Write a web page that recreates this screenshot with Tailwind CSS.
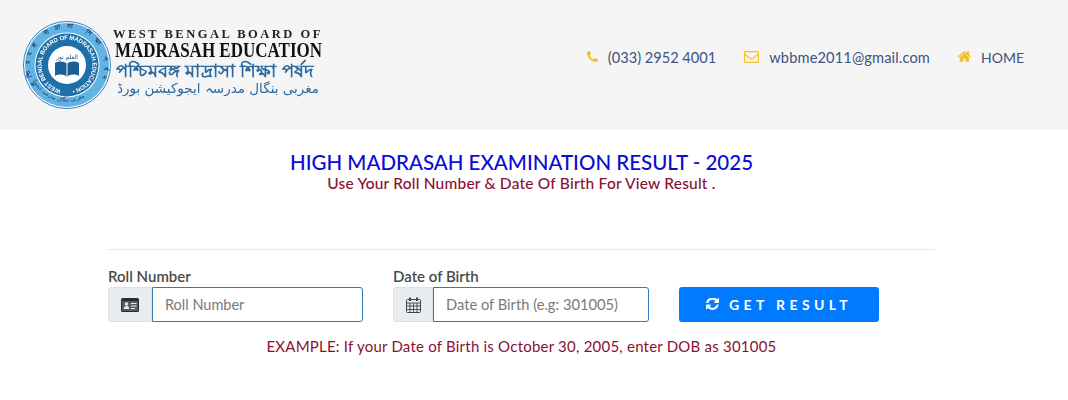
<!DOCTYPE html>
<html><head><meta charset="utf-8"><script src="https://cdn.jsdelivr.net/npm/@tailwindcss/browser@4"></script></head>
<body class="bg-white font-['Lato','Open_Sans',sans-serif]">
<div class="h-[400px] w-[1068px] overflow-hidden">
<header class="h-[130px] bg-[#f5f5f6] flex items-center justify-between pl-[22px] pr-[44px]">
  <div class="flex items-center gap-[1px] blur-[0.3px]">
    <svg width="90" height="90" viewBox="-1 -1 90 90" class="shrink-0">
      <defs>
        <path id="inner" d="M44 69.500a25.500 25.500 0 1 1 0-51a25.500 25.500 0 1 1 0 51"/>
        <path id="band" d="M14 66a37 37 0 1 1 60 0"/>
        <path id="bandb" d="M10 60a38.500 38.500 0 0 0 68 0"/>
      </defs>
      <circle cx="44" cy="44" r="43.500" fill="#fff" stroke="#2f7fb8" stroke-width="1"/>
      <circle cx="44" cy="44" r="42" fill="#62b2e4"/>
      <circle cx="44" cy="44" r="32.500" fill="#fff"/>
      <circle cx="44" cy="44" r="31.500" fill="#1f6fa8"/>
      <circle cx="44" cy="44" r="19" fill="#fff"/>
      <text font-size="6" font-weight="700" fill="#fff" font-family="Liberation Sans"><textPath href="#inner" startOffset="6" textLength="148">WEST BENGAL BOARD OF MADRASAH EDUCATION •</textPath></text>
      <text font-size="6" font-weight="700" fill="#173f66" font-family="Noto Sans"><textPath href="#band" startOffset="2" textLength="150">পশ্চিমবঙ্গ মাদ্রাসা শিক্ষা পর্ষদ</textPath></text>
      <text font-size="5.500" fill="#173f66" font-family="DejaVu Sans" direction="rtl"><textPath href="#bandb" startOffset="60">مغربی بنگال مدرسہ ایجوکیشن بورڈ</textPath></text>
      <path d="M32 42c4-2 9-2 12 1 3-3 8-3 12-1v13c-4-2-9-2-12 1-3-3-8-3-12-1z" fill="#1b5f96"/>
      <path d="M44 43v13" stroke="#fff" stroke-width="1"/>
      <text x="44" y="38" text-anchor="middle" font-size="6" fill="#1b4f78" font-family="DejaVu Sans">العلم نور</text>
    </svg>
    <div class="w-[212px] flex flex-col mt-[-7px]">
      <div class="font-['Liberation_Serif',serif] font-bold text-[12.500px] leading-[16px] tracking-[2.500px] text-[#222] whitespace-nowrap">WEST BENGAL BOARD OF</div>
      <div class="ml-[2px] font-['Liberation_Serif',serif] font-bold text-[20px] leading-[17px] text-[#111] whitespace-nowrap origin-left scale-x-[0.85]">MADRASAH EDUCATION</div>
      <div class="ml-[3px] font-['Noto_Sans','DejaVu_Sans',sans-serif] font-bold text-[18.300px] tracking-[0.270px] leading-[21px] text-[#2a6a9f] whitespace-nowrap">পশ্চিমবঙ্গ মাদ্রাসা শিক্ষা পর্ষদ</div>
      <div dir="rtl" class="font-['DejaVu_Sans',sans-serif] text-[13.500px] leading-[17px] pr-[6px] text-[#2a6a9f] whitespace-nowrap">مغربی بنگال مدرسہ ایجوکیشن بورڈ</div>
    </div>
  </div>
  <nav class="flex items-center mb-[15px] text-[14.600px] text-[#3f5180]">
    <svg width="11" height="12" viewBox="0 0 1408 1536" fill="#f5c026" class="mr-[10px]"><path d="M1408 1112q0 27-10 70.500t-21 68.500q-21 50-122 106-94 51-186 51-27 0-53-3.500t-57.500-12.500-47-14.500-55.500-20.500-49-18q-98-35-175-83-127-79-264-216t-216-264q-48-77-83-175-3-9-18-49t-20.500-55.500-14.500-47-12.500-57.500-3.500-53q0-92 51-186 56-101 106-122 25-11 68.500-21t70.500-10q14 0 21 3 18 6 53 76 11 19 30 54t35 63.500 31 53.500q3 4 17.500 25t21.500 35.500 7 28.500q0 20-28.500 50t-62 55-62 53-28.500 46q0 9 5 22.500t8.500 20.500 14 24 11.500 19q76 137 174 235t235 174q2 1 19 11.500t24 14 20.500 8.500 22.500 5q18 0 46-28.500t53-62 55-62 50-28.500q14 0 28.500 7t35.500 21.500 25 17.500q25 15 53.500 31t63.500 35 54 30q70 35 76 53 3 7 3 21z"/></svg>
    <span class="mr-[28px]">(033) 2952 4001</span>
    <svg width="15" height="12" viewBox="0 128 1792 1408" fill="#f5c026" class="mr-[10px]"><path d="M1664 1376v-768q-32 36-69 66-268 206-426 338-51 43-83 67t-86.500 48.500-102.500 24.500h-2q-48 0-102.500-24.500t-86.500-48.500-83-67q-158-132-426-338-37-30-69-66v768q0 13 9.500 22.500t22.500 9.500h1472q13 0 22.500-9.500t9.500-22.500zm0-1051v-24.500l-.5-13-3-12.500-5.500-9-9-7.500-14-2.500h-1472q-13 0-22.500 9.500t-9.500 22.500q0 168 147 284 193 152 401 317 6 5 35 29.500t46 37.500 44.500 31.500 50.500 27.500 43 9h2q20 0 43-9t50.500-27.500 44.500-31.500 46-37.500 35-29.500q208-165 401-317 54-43 100.500-115.500t46.500-131.500zm128-37v1088q0 66-47 113t-113 47h-1472q-66 0-113-47t-47-113v-1088q0-66 47-113t113-47h1472q66 0 113 47t47 113z"/></svg>
    <span class="mr-[28px] tracking-[0.150px]">wbbme2011@gmail.com</span>
    <svg width="13" height="12" viewBox="100 128 1600 1408" fill="#f5c026" class="mr-[10px]"><path d="M1472 864v480q0 26-19 45t-45 19h-384v-384h-256v384h-384q-26 0-45-19t-19-45v-480q0-1 .5-3t.5-3l575-474 575 474q1 2 1 6zm223-69l-62 74q-8 9-21 11h-3q-13 0-21-7l-692-577-692 577q-12 8-24 7-13-2-21-11l-62-74q-8-10-7-23.500t11-21.500l719-599q32-26 76-26t76 26l244 204v-195q0-14 9-23t23-9h192q14 0 23 9t9 23v408l219 182q10 8 11 21.500t-7 23.500z"/></svg>
    <span class="text-[14px]">HOME</span>
  </nav>
</header>
<main class="ml-[108px] w-[827px]">
  <div class="pt-[20px] text-center">
    <h1 class="text-[20.500px] leading-[24px] font-medium text-[#0b0bd6]">HIGH MADRASAH EXAMINATION RESULT - 2025</h1>
    <p class="mt-[1px] text-[15.500px] leading-[16px] tracking-[0.200px] font-medium text-[#8b1030]">Use Your Roll Number &amp; Date Of Birth For View Result .</p>
  </div>
  <div class="mt-[58px] border-t border-[#e9e9e9]"></div>
  <div class="mt-[17px] flex items-end">
    <div class="w-[255px]">
      <div class="text-[15px] leading-[18px] font-semibold text-[#4a4a4a] mb-[2px]">Roll Number</div>
      <div class="flex h-[35px]">
        <div class="w-[44px] rounded-l-[3px] bg-[#e9ecef] border border-[#dde0e3] flex items-center justify-center">
          <svg width="18" height="14" viewBox="0 0 18 14"><rect width="18" height="14" rx="1.500" fill="#2b2b2b"/><rect x="1" y="3" width="16" height="10" fill="#e9ecef" opacity=".25"/><circle cx="5.500" cy="6" r="1.700" fill="#e9ecef"/><path d="M2.800 11c0-2 1-3 2.700-3s2.700 1 2.700 3z" fill="#e9ecef"/><path d="M10 5.500h5.500M10 8h5.500M10 10.500h4" stroke="#e9ecef" stroke-width="1"/></svg>
        </div>
        <input placeholder="Roll Number" class="w-[211px] rounded-r-[3px] border border-[#2f7ab8] bg-white pl-[12px] text-[14.500px] outline-none placeholder:text-[#7a7a7a]">
      </div>
    </div>
    <div class="ml-[30px] w-[256px]">
      <div class="text-[15px] leading-[18px] font-semibold text-[#4a4a4a] mb-[2px]">Date of Birth</div>
      <div class="flex h-[35px]">
        <div class="w-[40px] rounded-l-[3px] bg-[#e9ecef] border border-[#dde0e3] flex items-center justify-center">
          <svg width="15" height="16" viewBox="0 0 15 16" fill="none" stroke="#444" stroke-width="1"><rect x=".5" y="2.500" width="14" height="13" rx="1"/><path d="M.5 6h14M.5 9h14M.5 12.500h14M4 6v9.500M7.500 6v9.500M11 6v9.500" stroke-width=".9"/><path d="M4 .5v3.500M11 .5v3.500" stroke-width="2"/></svg>
        </div>
        <input placeholder="Date of Birth (e.g: 301005)" class="w-[216px] rounded-r-[3px] border border-[#2f7ab8] bg-white pl-[12px] text-[14.700px] outline-none placeholder:text-[#7a7a7a]">
      </div>
    </div>
    <button class="ml-[30px] w-[200px] h-[35px] rounded-[3px] bg-[#007bff] text-white text-[14px] font-bold tracking-[4.400px] flex items-center justify-center gap-[10px]">
      <svg width="13" height="13" viewBox="0 0 1536 1536" fill="#fff"><path d="M1511 800q0 5-1 7-64 268-268 434.500t-478 166.500q-146 0-282.500-55t-243.500-157l-129 129q-19 19-45 19t-45-19-19-45v-448q0-26 19-45t45-19h448q26 0 45 19t19 45-19 45l-137 137q71 66 161 102t187 36q134 0 250-65t186-179q11-17 53-117 8-23 30-23h192q13 0 22.500 9.500t9.500 22.500zm25-736v448q0 26-19 45t-45 19h-448q-26 0-45-19t-19-45 19-45l138-138q-148-137-349-137-134 0-250 65t-186 179q-11 17-53 117-8 23-30 23h-199q-13 0-22.500-9.500t-9.500-22.500v-7q65-268 270-434.500t480-166.500q146 0 284 55.500t245 156.500l130-129q19-19 45-19t45 19 19 45z"/></svg>
      <span>GET RESULT</span>
    </button>
  </div>
  <p class="mt-[15px] text-center text-[15px] leading-[18px] tracking-[0.220px] text-[#8b1030]">EXAMPLE: If your Date of Birth is October 30, 2005, enter DOB as 301005</p>
</main>
</div>
</body></html>
